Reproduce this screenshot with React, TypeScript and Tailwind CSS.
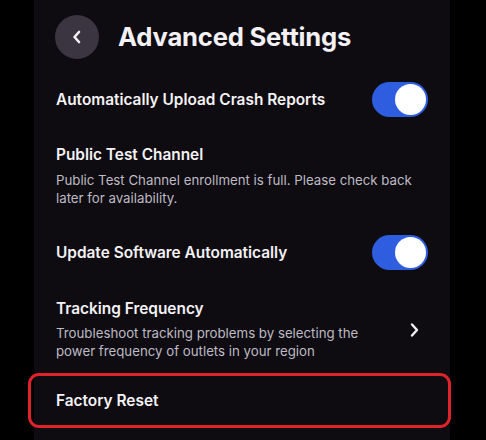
import React from "react";

function Toggle() {
  return (
    <div className="w-[56px] h-[35px] rounded-full bg-[#2f5ddf] flex items-center justify-end px-[2px] shrink-0">
      <div className="w-[31px] h-[31px] rounded-full bg-white" />
    </div>
  );
}

export default function App() {
  return (
    <div
      className="w-[486px] h-[440px] bg-black overflow-hidden pl-[34px]"
      style={{ fontFamily: "Inter, 'Liberation Sans', sans-serif" }}
    >
      <div className="w-[416px] h-[440px] bg-[#0e0c11] px-[22px] pt-[15px] flex flex-col">
        <div className="flex items-center gap-[19px] h-[44px]">
          <div className="w-[44px] h-[44px] rounded-full bg-[#3a3540] flex items-center justify-center -ml-[1px]">
            <svg width="14" height="16" viewBox="0 0 14 16">
              <path d="M9 3 L4.5 8 L9 13" stroke="#f2f0f4" strokeWidth="2.6" fill="none" strokeLinecap="round" strokeLinejoin="round" />
            </svg>
          </div>
          <div className="text-[25.6px] font-bold text-[#f3f1f5] tracking-[-0.2px]">Advanced Settings</div>
        </div>

        <div className="mt-[23px] h-[35px] flex items-center justify-between">
          <div className="text-[15.4px] font-semibold text-[#f4f2f5] leading-[20px]">Automatically Upload Crash Reports</div>
          <Toggle />
        </div>

        <div className="mt-[28px]">
          <div className="text-[15.4px] font-semibold text-[#f4f2f5] leading-[20px]">Public Test Channel</div>
          <div className="mt-[7px] text-[13.25px] text-[#bfbac3] leading-[17.5px]">
            Public Test Channel enrollment is full. Please check back
            <br />
            later for availability.
          </div>
        </div>

        <div className="mt-[28px] h-[35px] flex items-center justify-between">
          <div className="text-[15.4px] font-semibold text-[#f4f2f5] leading-[20px]">Update Software Automatically</div>
          <Toggle />
        </div>

        <div className="mt-[29px] flex items-center justify-between">
          <div>
            <div className="text-[15.4px] font-semibold text-[#f4f2f5] leading-[20px]">Tracking Frequency</div>
            <div className="mt-[6px] text-[13.25px] text-[#bfbac3] leading-[17.5px]">
              Troubleshoot tracking problems by selecting the
              <br />
              power frequency of outlets in your region
            </div>
          </div>
          <svg width="12" height="16" viewBox="0 0 12 16" className="mr-[8px]">
            <path d="M4 2.5 L9 8 L4 13.5" stroke="#f2f0f4" strokeWidth="2.4" fill="none" strokeLinecap="round" strokeLinejoin="round" />
          </svg>
        </div>

        <div className="mt-[13px] -ml-[28px] -mr-[23px] h-[55px] border-[3px] border-[#e0232b] rounded-[11px] flex items-center pl-[25px]">
          <div className="text-[15.4px] font-semibold text-[#f4f2f5] leading-[20px]">Factory Reset</div>
        </div>
      </div>
    </div>
  );
}
